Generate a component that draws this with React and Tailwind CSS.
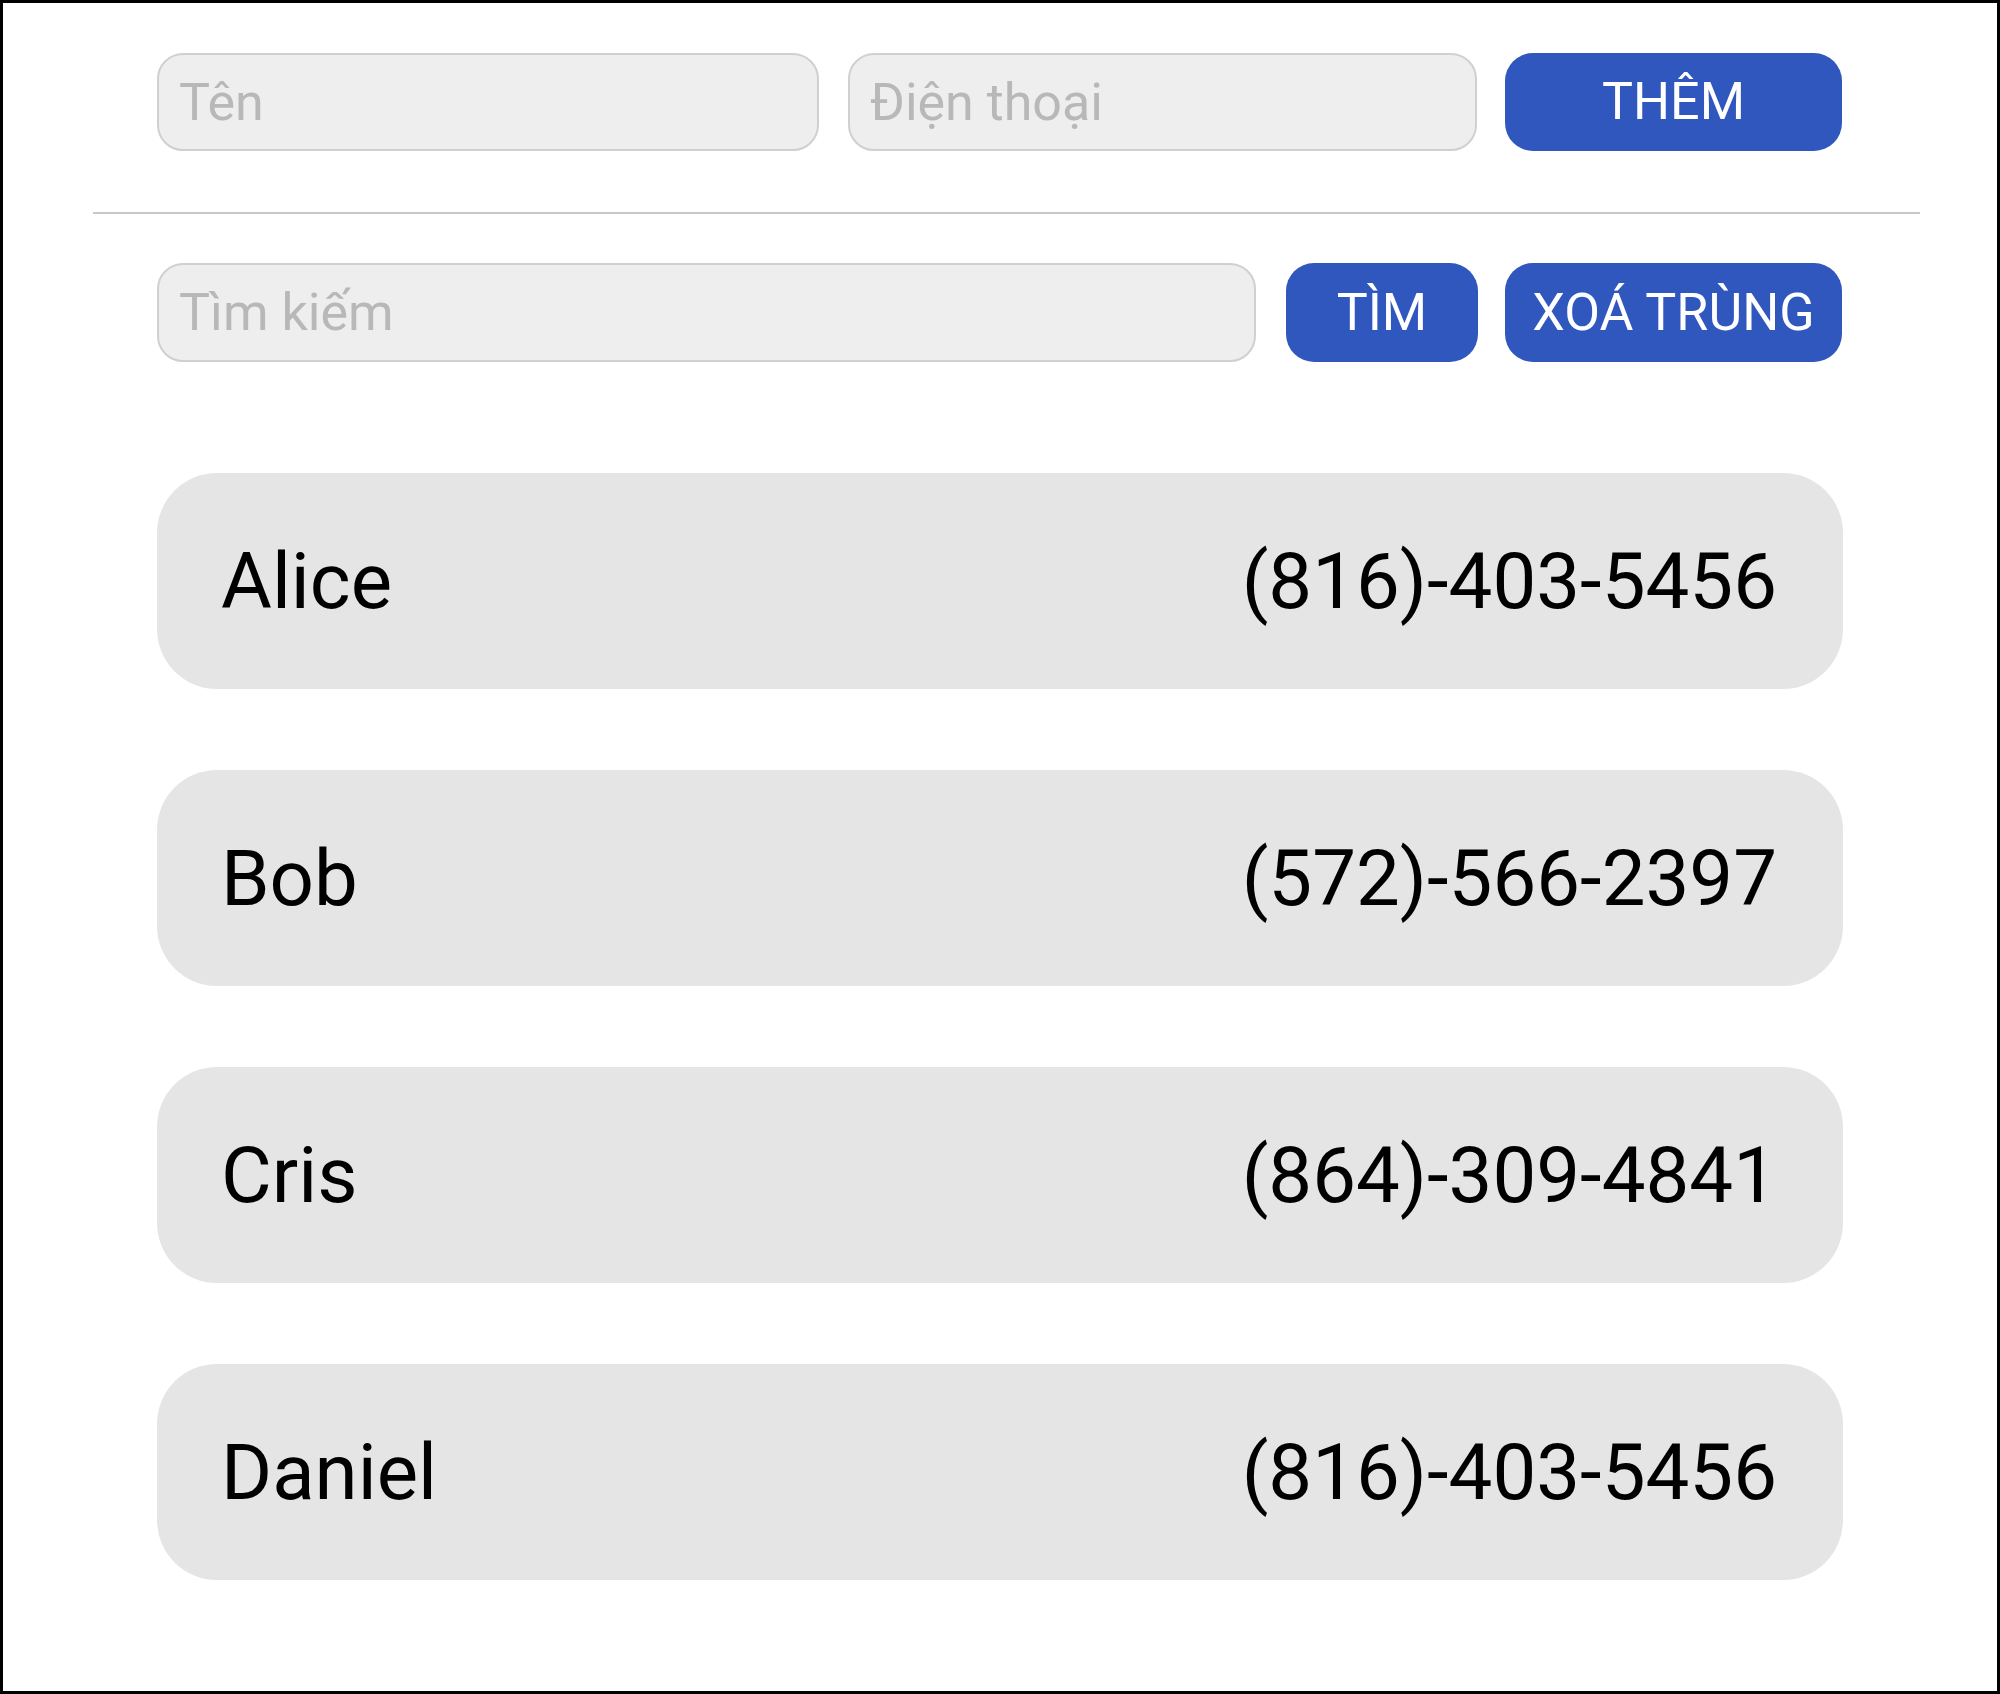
import { useState } from 'react';

const initialContacts = [
  { id: 1, name: 'Alice', phone: '(816)-403-5456' },
  { id: 2, name: 'Bob', phone: '(572)-566-2397' },
  { id: 3, name: 'Cris', phone: '(864)-309-4841' },
  { id: 4, name: 'Daniel', phone: '(816)-403-5456' },
];

const inputCls =
  'h-full rounded-[26px] border-2 border-[#d0d0d0] bg-[#eeeeee] px-[20px] text-[52px] text-black outline-none placeholder:text-[#b8b8b8]';
const btnCls =
  'h-full shrink-0 rounded-[28px] bg-[#3057be] text-[52px] text-white leading-none';

export default function App() {
  const [contacts, setContacts] = useState(initialContacts);
  const [name, setName] = useState('');
  const [phone, setPhone] = useState('');
  const [query, setQuery] = useState('');

  const addContact = () => {
    if (!name.trim() || !phone.trim()) return;
    setContacts([...contacts, { id: Date.now(), name, phone }]);
    setName('');
    setPhone('');
  };

  // drop entries whose phone already appeared
  const removeDuplicates = () => {
    const seen = new Set();
    setContacts(contacts.filter(c => (seen.has(c.phone) ? false : seen.add(c.phone))));
  };

  const shown = contacts.filter(c => c.name.toLowerCase().includes(query.toLowerCase()));

  return (
    <div className="h-[1694px] w-[2000px] border-[3px] border-black bg-white font-['Roboto','Liberation_Sans',sans-serif]">
      {/* Add row */}
      <div className="mx-[154px] mt-[50px] flex h-[98px] gap-[29px]">
        <input className={`${inputCls} w-[662px]`} placeholder="Tên" value={name} onChange={e => setName(e.target.value)} />
        <input className={`${inputCls} w-[629px]`} placeholder="Điện thoại" value={phone} onChange={e => setPhone(e.target.value)} />
        <button className={`${btnCls} ml-[-1px] w-[337px]`} onClick={addContact}>THÊM</button>
      </div>

      <div className="ml-[90px] mr-[77px] mt-[61px] h-[2px] bg-[#c8c8c8]" />

      {/* Search row */}
      <div className="mx-[154px] mt-[49px] flex h-[99px]">
        <input className={`${inputCls} w-[1099px]`} placeholder="Tìm kiếm" value={query} onChange={e => setQuery(e.target.value)} />
        <button className={`${btnCls} ml-[30px] w-[192px]`}>TÌM</button>
        <button className={`${btnCls} ml-[27px] w-[337px]`} onClick={removeDuplicates}>XOÁ TRÙNG</button>
      </div>

      {/* Contact list */}
      <div className="mx-[154px] mt-[111px] flex flex-col gap-[81px]">
        {shown.map(c => (
          <div key={c.id} className="flex h-[216px] items-center justify-between rounded-[60px] bg-[#e5e5e5] pl-[64px] pr-[66px] text-[78px] text-black">
            <span>{c.name}</span>
            <span>{c.phone}</span>
          </div>
        ))}
      </div>
    </div>
  );
}
